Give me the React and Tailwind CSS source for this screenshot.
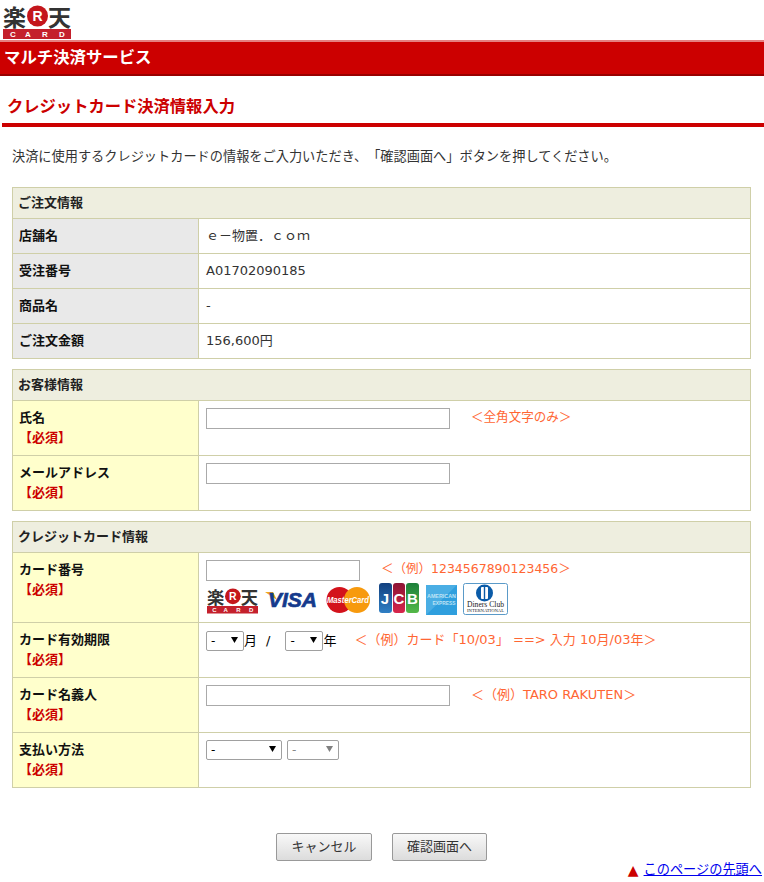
import React from 'react';

const font = { fontFamily: '"DejaVu Sans", "Noto Sans CJK JP", sans-serif' };
const sansLatin = '"Liberation Sans", sans-serif';
const cjk = '"Noto Sans CJK JP", sans-serif';

// 楽R天 mark, drawn in a 68x34 box
function RakutenMark() {
    return (
        <g>
            <text x="0" y="21" fontSize="23" fontWeight="700" fill="#333" fontFamily={cjk}>楽</text>
            <circle cx="34.5" cy="11" r="10.5" fill="#c4161c" />
            <text x="34.5" y="16" fontSize="14" fontWeight="700" fill="#fff" textAnchor="middle" fontFamily={sansLatin}>R</text>
            <text x="45" y="21" fontSize="23" fontWeight="700" fill="#333" fontFamily={cjk}>天</text>
            <rect x="0" y="24" width="68" height="10" fill="#c4202c" />
            <text x="10" y="32" fontSize="8" fontWeight="700" fill="#fff" textAnchor="middle" fontFamily={sansLatin}>C</text>
            <text x="25" y="32" fontSize="8" fontWeight="700" fill="#fff" textAnchor="middle" fontFamily={sansLatin}>A</text>
            <text x="42" y="32" fontSize="8" fontWeight="700" fill="#fff" textAnchor="middle" fontFamily={sansLatin}>R</text>
            <text x="59" y="32" fontSize="8" fontWeight="700" fill="#fff" textAnchor="middle" fontFamily={sansLatin}>D</text>
        </g>
    );
}

function CardLogos() {
    return (
        <svg width="302" height="33" viewBox="0 0 302 33" className="block">
            <defs>
                <linearGradient id="jcbBlue" x1="0" y1="0" x2="0" y2="1">
                    <stop offset="0" stopColor="#12407f" />
                    <stop offset="1" stopColor="#2f7fc4" />
                </linearGradient>
                <linearGradient id="jcbRed" x1="0" y1="0" x2="0" y2="1">
                    <stop offset="0" stopColor="#8c1434" />
                    <stop offset="1" stopColor="#d8264c" />
                </linearGradient>
                <linearGradient id="jcbGreen" x1="0" y1="0" x2="0" y2="1">
                    <stop offset="0" stopColor="#1c7f3a" />
                    <stop offset="1" stopColor="#54b848" />
                </linearGradient>
            </defs>
            <g transform="translate(1,5) scale(0.75)">
                <RakutenMark />
            </g>
            {/* VISA */}
            <path d="M59 9 L67 9 L71 17 Z" fill="#f2a71b" />
            <text x="62" y="24" fontSize="21" fontWeight="700" fontStyle="italic" fill="#153a8c" stroke="#153a8c" strokeWidth="0.7" fontFamily={sansLatin} textLength="49" lengthAdjust="spacingAndGlyphs">VISA</text>
            {/* MasterCard */}
            <circle cx="133.5" cy="17" r="13" fill="#d3121b" />
            <circle cx="151" cy="17" r="13" fill="#f79a0e" />
            <text x="142" y="20" fontSize="9" fontWeight="700" fontStyle="italic" fill="#fff" textAnchor="middle" fontFamily={sansLatin} textLength="42" lengthAdjust="spacingAndGlyphs">MasterCard</text>
            {/* JCB */}
            <rect x="173" y="0" width="13" height="30" rx="3" fill="url(#jcbBlue)" />
            <rect x="187" y="0" width="12" height="30" rx="3" fill="url(#jcbRed)" />
            <rect x="200" y="0" width="13" height="30" rx="3" fill="url(#jcbGreen)" />
            <text x="179" y="21" fontSize="15" fontWeight="700" fill="#fff" textAnchor="middle" fontFamily={sansLatin}>J</text>
            <text x="193" y="21" fontSize="15" fontWeight="700" fill="#fff" textAnchor="middle" fontFamily={sansLatin}>C</text>
            <text x="206.5" y="21" fontSize="15" fontWeight="700" fill="#fff" textAnchor="middle" fontFamily={sansLatin}>B</text>
            {/* American Express */}
            <rect x="220" y="2" width="31" height="30" fill="#2f9fde" />
            <path d="M220 2 L251 2 L220 32 Z" fill="#6cc0ec" opacity="0.45" />
            <text x="235.5" y="15" fontSize="5.5" fontWeight="700" fill="#bfe3f5" textAnchor="middle" fontFamily={sansLatin} textLength="29" lengthAdjust="spacingAndGlyphs">AMERICAN</text>
            <text x="238" y="22" fontSize="5.5" fontWeight="700" fill="#bfe3f5" textAnchor="middle" fontFamily={sansLatin} textLength="23" lengthAdjust="spacingAndGlyphs">EXPRESS</text>
            {/* Diners Club */}
            <rect x="257.5" y="0.5" width="44" height="31" rx="2" fill="#fff" stroke="#5a9ac8" />
            <circle cx="278.5" cy="10" r="8.5" fill="#0a5ba8" />
            <rect x="275" y="4" width="7" height="12" rx="1" fill="#fff" />
            <rect x="277.8" y="3" width="1.4" height="14" fill="#0a5ba8" />
            <text x="279.5" y="23.5" fontSize="8" fill="#222" textAnchor="middle" fontFamily='"Liberation Serif", serif' textLength="37" lengthAdjust="spacingAndGlyphs">Diners Club</text>
            <text x="279.5" y="29" fontSize="4" fill="#222" textAnchor="middle" fontFamily='"Liberation Serif", serif' textLength="37" lengthAdjust="spacingAndGlyphs">INTERNATIONAL</text>
        </svg>
    );
}

function Section({ title, children, className = '' }) {
    return (
        <div className={`border border-[#cfcfa8] ${className}`}>
            <div className="h-[31px] bg-[#eeeedf] border-b border-[#cfcfa8] pl-[5px] flex items-center text-[13px] font-bold text-[#222]">{title}</div>
            {children}
        </div>
    );
}

function InfoRow({ label, children, last }) {
    return (
        <div className={`flex ${last ? 'h-[34px]' : 'h-[35px] border-b border-[#cfcfa8]'}`}>
            <div className="w-[186px] shrink-0 bg-[#e9e9e9] border-r border-[#cfcfa8] pl-[6px] flex items-center text-[13px] font-bold text-[#111]">{label}</div>
            <div className="flex-1 pl-[7px] flex items-center text-[13px] text-[#333]">{children}</div>
        </div>
    );
}

function InputRow({ label, height = 'h-[55px]', last, children }) {
    return (
        <div className={`flex ${height} ${last ? '' : 'border-b border-[#cfcfa8]'}`}>
            <div className="w-[186px] shrink-0 bg-[#ffffcc] border-r border-[#cfcfa8] pl-[6px] pt-[7px] text-[13px] leading-[20px] text-[#111]">
                <div className="font-bold">{label}</div>
                <div className="font-bold text-[#cc0000]">【必須】</div>
            </div>
            <div className="flex-1 pl-[7px] pt-[7px] text-[13px] text-[#333]">{children}</div>
        </div>
    );
}

function Hint({ children, className = 'text-[13px]' }) {
    return <span className={`mb-[2px] ml-[21px] text-[#ff6633] ${className}`}>{children}</span>;
}

function Select({ className, disabled }) {
    return (
        <div className={`relative h-[20px] ${className}`}>
            <select disabled={disabled} className={`block w-full h-full pl-[4px] border border-[#a0a0a0] rounded-[2px] bg-white text-[12px] leading-none appearance-none ${disabled ? 'text-[#888]' : 'text-black'}`}>
                <option>-</option>
            </select>
            <svg width="7" height="6" viewBox="0 0 7 6" className="absolute right-[6px] top-[6px]">
                <path d="M0 0 L7 0 L3.5 6 Z" fill={disabled ? '#808080' : '#000'} />
            </svg>
        </div>
    );
}

export default function App() {
    return (
        <div className="bg-white w-[764px] h-[882px] overflow-hidden text-[13px] [text-spacing-trim:space-all]" style={font}>
            <div className="h-[40px] pl-[3px] pt-[5px]">
                <svg width="68" height="34" viewBox="0 0 68 34" className="block">
                    <RakutenMark />
                </svg>
            </div>
            <div className="h-[36px] bg-[#cc0000] border-t-2 border-t-[#e58080] border-b-2 border-b-[#990000] pl-[4px] flex items-center text-[16.4px] font-bold text-white">
                マルチ決済サービス
            </div>
            <div className="mt-[16px] ml-[2px] h-[35px] border-b-4 border-[#cc0000] pl-[5px] flex items-center text-[16.3px] font-bold text-[#cc0000]">
                クレジットカード決済情報入力
            </div>
            <p className="mt-[20px] ml-[12px] h-[20px] leading-[20px] text-[13.2px] text-[#333]">
                決済に使用するクレジットカードの情報をご入力いただき、「確認画面へ」ボタンを押してください。
            </p>

            <div className="mt-[20px] ml-[12px] w-[739px]">
                <Section title="ご注文情報">
                    <InfoRow label="店舗名">ｅ－物置．ｃｏｍ</InfoRow>
                    <InfoRow label="受注番号">A01702090185</InfoRow>
                    <InfoRow label="商品名">-</InfoRow>
                    <InfoRow label="ご注文金額" last>156,600円</InfoRow>
                </Section>

                <Section title="お客様情報" className="mt-[10px]">
                    <InputRow label="氏名">
                        <div className="flex items-center">
                            <input type="text" className="w-[244px] h-[21px] border border-[#aaaaaa] bg-white" />
                            <Hint className="text-[12.55px]">＜全角文字のみ＞</Hint>
                        </div>
                    </InputRow>
                    <InputRow label="メールアドレス" height="h-[54px]" last>
                        <input type="text" className="block w-[244px] h-[21px] border border-[#aaaaaa] bg-white" />
                    </InputRow>
                </Section>

                <Section title="クレジットカード情報" className="mt-[10px]">
                    <InputRow label="カード番号" height="h-[70px]">
                        <div className="flex items-center">
                            <input type="text" className="w-[154px] h-[21px] border border-[#aaaaaa] bg-white" />
                            <Hint className="text-[12.5px]">＜（例）1234567890123456＞</Hint>
                        </div>
                        <div className="mt-[2px]">
                            <CardLogos />
                        </div>
                    </InputRow>
                    <InputRow label="カード有効期限">
                        <div className="flex items-center">
                            <Select className="w-[38px]" />
                            <span className="text-black">月</span>
                            <span className="ml-[9px] text-black">/</span>
                            <Select className="w-[38px] ml-[15px]" />
                            <span className="text-black">年</span>
                            <span className="mb-[2px] ml-[18px] text-[13px] text-[#ff6633]">＜（例）カード「10/03」 ==&gt; 入力 10月/03年＞</span>
                        </div>
                    </InputRow>
                    <InputRow label="カード名義人">
                        <div className="flex items-center">
                            <input type="text" className="w-[244px] h-[21px] border border-[#aaaaaa] bg-white" />
                            <Hint>＜（例）TARO RAKUTEN＞</Hint>
                        </div>
                    </InputRow>
                    <InputRow label="支払い方法" height="h-[54px]" last>
                        <div className="flex items-center gap-[5px]">
                            <Select className="w-[76px]" />
                            <Select className="w-[52px]" disabled />
                        </div>
                    </InputRow>
                </Section>
            </div>

            <div className="mt-[45px] flex justify-center gap-[20px] pr-[1px]">
                <button className="w-[96px] h-[28px] border border-[#999999] rounded-[2px] bg-gradient-to-b from-[#f8f8f8] to-[#dcdcdc] text-[13px] text-[#333]">キャンセル</button>
                <button className="w-[95px] h-[28px] border border-[#999999] rounded-[2px] bg-gradient-to-b from-[#f8f8f8] to-[#dcdcdc] text-[13px] text-[#333]">確認画面へ</button>
            </div>
            <div className="pr-[2px] flex justify-end items-center h-[18px] text-[13.2px]">
                <span className="text-[#cc0000] mr-[5px] text-[14px]">▲</span>
                <a href="#top" className="text-[#0000ee] underline">このページの先頭へ</a>
            </div>
        </div>
    );
}
